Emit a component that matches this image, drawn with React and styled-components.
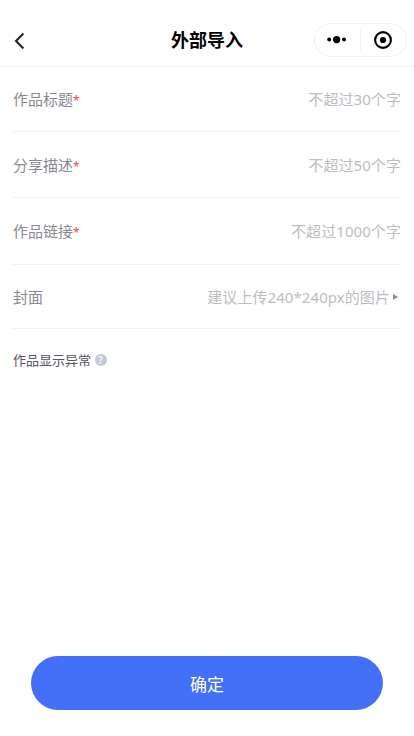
import React from 'react';
import styled, { createGlobalStyle } from 'styled-components';

const FIELDS = [
    { label: '作品标题', required: true, hint: '不超过30个字', height: 65 },
    { label: '分享描述', required: true, hint: '不超过50个字', height: 66 },
    { label: '作品链接', required: true, hint: '不超过1000个字', height: 67 },
    { label: '封面', hint: '建议上传240*240px的图片', height: 64, arrow: true },
];

function App() {
    return (
        <Page>
            <GlobalStyle />
            <Header>
                <BackButton>
                    <svg width="12" height="18" viewBox="0 0 12 18" fill="none">
                        <path d="M10.4 1.4 L3 9 L10.4 16.6" stroke="#222" strokeWidth="2.1" />
                    </svg>
                </BackButton>
                <Title>外部导入</Title>
                <Capsule>
                    <CapsuleItem>
                        <svg width="20" height="8" viewBox="0 0 20 8">
                            <circle cx="2.2" cy="3.6" r="2" />
                            <circle cx="9.6" cy="3.6" r="3.6" />
                            <circle cx="17" cy="3.6" r="2" />
                        </svg>
                    </CapsuleItem>
                    <Divider />
                    <CapsuleItem>
                        <svg width="18" height="18" viewBox="0 0 18 18">
                            <circle cx="9" cy="9" r="7.9" fill="none" stroke="#000" strokeWidth="2.1" />
                            <circle cx="9" cy="9" r="3.1" />
                        </svg>
                    </CapsuleItem>
                </Capsule>
            </Header>
            <Form>
                {FIELDS.map((field) => (
                    <Row key={field.label} $height={field.height}>
                        <Label>
                            {field.label}
                            {field.required && <Star>*</Star>}
                        </Label>
                        <Hint>{field.hint}</Hint>
                        {field.arrow && <Arrow />}
                    </Row>
                ))}
                <Help>
                    作品显示异常
                    <HelpMark>?</HelpMark>
                </Help>
            </Form>
            <Footer>
                <Submit>确定</Submit>
            </Footer>
        </Page>
    );
}

const GlobalStyle = createGlobalStyle`
    body {
        margin: 0;
        background: #fff;
        font-family: "Noto Sans", "Noto Sans CJK SC", sans-serif;
    }
    * {
        box-sizing: border-box;
    }
`;

const Page = styled.div`
    display: flex;
    flex-direction: column;
    height: 100vh;
    overflow: hidden;
    background: #fff;
`;

const Header = styled.header`
    display: grid;
    grid-template-columns: 1fr auto 1fr;
    align-items: center;
    flex: none;
    height: 67px;
    padding: 14px 7px 0 7px;
    border-bottom: 1px solid #f0f0f1;
`;

const BackButton = styled.div`
    display: flex;
    padding: 2px 0 0 6px;
`;

const Title = styled.h1`
    margin: 0;
    font-size: 18px;
    line-height: 26px;
    font-weight: 700;
    color: #000;
`;

const Capsule = styled.div`
    display: flex;
    align-items: center;
    justify-self: end;
    width: 93px;
    height: 34px;
    border: 1px solid #f0f0f0;
    border-radius: 17px;
`;

const CapsuleItem = styled.div`
    display: flex;
    flex: 1;
    justify-content: center;
    padding-right: 2px;
`;

const Divider = styled.div`
    width: 1px;
    height: 20px;
    background: #f0f0f0;
`;

const Form = styled.main`
    flex: 1;
    padding: 0 13px;
`;

const Row = styled.div`
    display: flex;
    align-items: center;
    height: ${(props) => props.$height}px;
    border-bottom: 1px solid #f0f0f2;
    font-size: 15px;
    line-height: 22px;
    white-space: nowrap;
`;

const Label = styled.div`
    display: flex;
    height: 22px;
    color: #888992;
`;

const Star = styled.span`
    padding-top: 2px;
    font-size: 12px;
    color: #ff4040;
`;

const Hint = styled.div`
    margin-left: auto;
    letter-spacing: 0.07px;
    color: #bcbdc3;
`;

const Arrow = styled.span`
    margin: 0 3px 0 3px;
    border-left: 5px solid #8b8d96;
    border-top: 3.5px solid transparent;
    border-bottom: 3.5px solid transparent;
`;

const Help = styled.div`
    display: flex;
    align-items: center;
    gap: 3.5px;
    margin-top: 21px;
    font-size: 13px;
    line-height: 20px;
    color: #555661;
`;

const HelpMark = styled.span`
    width: 12px;
    height: 12px;
    border-radius: 50%;
    background: #c4c8d3;
    color: #fff;
    font-size: 10px;
    font-weight: 500;
    line-height: 12px;
    text-align: center;
`;

const Footer = styled.footer`
    padding: 0 31px 26px;
`;

const Submit = styled.button`
    display: block;
    width: 100%;
    height: 54px;
    padding: 0;
    border: 0;
    border-radius: 27px;
    background: #4370f7;
    color: #fff;
    font-family: inherit;
    font-size: 17px;
`;

export default App;
